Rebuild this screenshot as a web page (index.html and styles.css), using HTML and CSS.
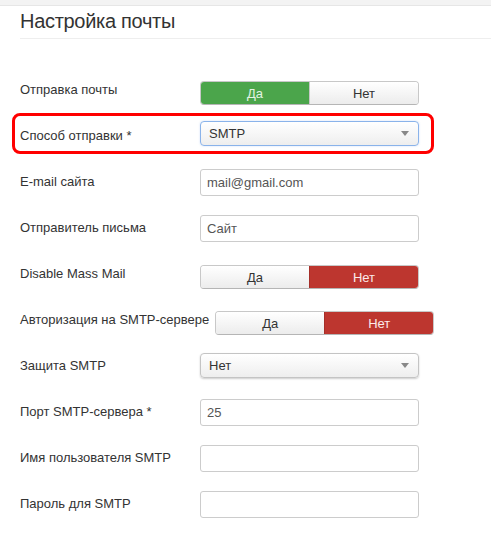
FILE: index.html
```html
<!DOCTYPE html>
<html lang="ru">
<head>
<meta charset="utf-8">
<title>Настройка почты</title>
<link rel="stylesheet" href="styles.css">
</head>
<body>
<div class="topbar"></div>
<div class="page">
  <h2 class="title">Настройка почты</h2>
  <div class="form">
    <div class="row">
      <div class="label">Отправка почты</div>
      <div class="toggle">
        <span class="opt on-yes">Да</span>
        <span class="opt">Нет</span>
      </div>
    </div>
    <div class="row row-marked">
      <div class="mark"></div>
      <div class="label">Способ отправки *</div>
      <div class="select focus"><span>SMTP</span><i class="caret"></i></div>
    </div>
    <div class="row">
      <div class="label">E-mail сайта</div>
      <div class="input">mail@gmail.com</div>
    </div>
    <div class="row">
      <div class="label">Отправитель письма</div>
      <div class="input">Сайт</div>
    </div>
    <div class="row">
      <div class="label">Disable Mass Mail</div>
      <div class="toggle">
        <span class="opt">Да</span>
        <span class="opt on-no">Нет</span>
      </div>
    </div>
    <div class="row">
      <div class="label">Авторизация на SMTP-сервере</div>
      <div class="toggle">
        <span class="opt">Да</span>
        <span class="opt on-no">Нет</span>
      </div>
    </div>
    <div class="row">
      <div class="label">Защита SMTP</div>
      <div class="select shadow"><span>Нет</span><i class="caret"></i></div>
    </div>
    <div class="row">
      <div class="label">Порт SMTP-сервера *</div>
      <div class="input">25</div>
    </div>
    <div class="row">
      <div class="label">Имя пользователя SMTP</div>
      <div class="input"></div>
    </div>
    <div class="row">
      <div class="label">Пароль для SMTP</div>
      <div class="input"></div>
    </div>
  </div>
</div>
</body>
</html>
```
FILE: styles.css
```css
html, body {
  margin: 0;
  padding: 0;
  background: #fff;
}
body {
  font-family: "Liberation Sans", Arial, sans-serif;
  color: #333;
  font-size: 13px;
}
.topbar {
  width: 491px;
  height: 5px;
  background: #f3f3f3;
  border-bottom: 1px solid #e6e6e6;
}
.page {
  width: 471px;
  padding-left: 20px;
}
.title {
  margin: 3px 0 0;
  font-size: 20px;
  letter-spacing: -0.3px;
  font-weight: normal;
  line-height: 24px;
  color: #333;
  padding-bottom: 5px;
  border-bottom: 1px solid #eee;
}
.form {
  padding-top: 38px;
}
.row {
  display: flex;
  align-items: flex-start;
  height: 46px;
  position: relative;
}
.label {
  min-width: 174px;
  margin-right: 6px;
  padding-top: 4px;
  line-height: 18px;
  white-space: nowrap;
  color: #333;
}
.toggle {
  display: flex;
  width: 219px;
  height: 24px;
  margin-top: 4px;
  box-sizing: border-box;
  border: 1px solid #c8c8c8;
  border-bottom-color: #b5b5b5;
  border-radius: 4px;
  overflow: hidden;
}
.opt {
  flex: 1;
  display: flex;
  align-items: center;
  justify-content: center;
  background: linear-gradient(#ffffff, #ececec);
  color: #333;
  font-size: 13px;
}
.opt + .opt {
  border-left: 1px solid #c8c8c8;
}
.opt.on-yes {
  background: #4ba54b;
  color: #e3f3e3;
  border-color: #3e8f3e;
}
.opt.on-no {
  background: #bd362f;
  color: #fbeaea;
  border-color: #a52f29;
}
.input {
  width: 219px;
  height: 27px;
  box-sizing: border-box;
  border: 1px solid #ccc;
  border-radius: 3px;
  padding: 0 6px;
  display: flex;
  align-items: center;
  color: #555;
  background: #fff;
}
.select {
  width: 219px;
  height: 25px;
  box-sizing: border-box;
  border: 1px solid #c4c4c4;
  border-radius: 4px;
  padding: 0 9px 0 8px;
  display: flex;
  align-items: center;
  justify-content: space-between;
  background: linear-gradient(#ffffff, #eeeeee);
  color: #333;
}
.select.focus {
  margin-top: -2px;
  border-color: #8ab3ea;
  box-shadow: 0 0 2px rgba(100, 150, 230, 0.35);
}
.select.shadow {
  box-shadow: 0 1px 2px rgba(0, 0, 0, 0.2);
}
.caret {
  width: 0;
  height: 0;
  border-left: 4px solid transparent;
  border-right: 4px solid transparent;
  border-top: 5px solid #888;
}
.mark {
  position: absolute;
  left: -8px;
  top: -10px;
  width: 422px;
  height: 41px;
  box-sizing: border-box;
  border: 3px solid #f00;
  border-radius: 8px;
}
```
